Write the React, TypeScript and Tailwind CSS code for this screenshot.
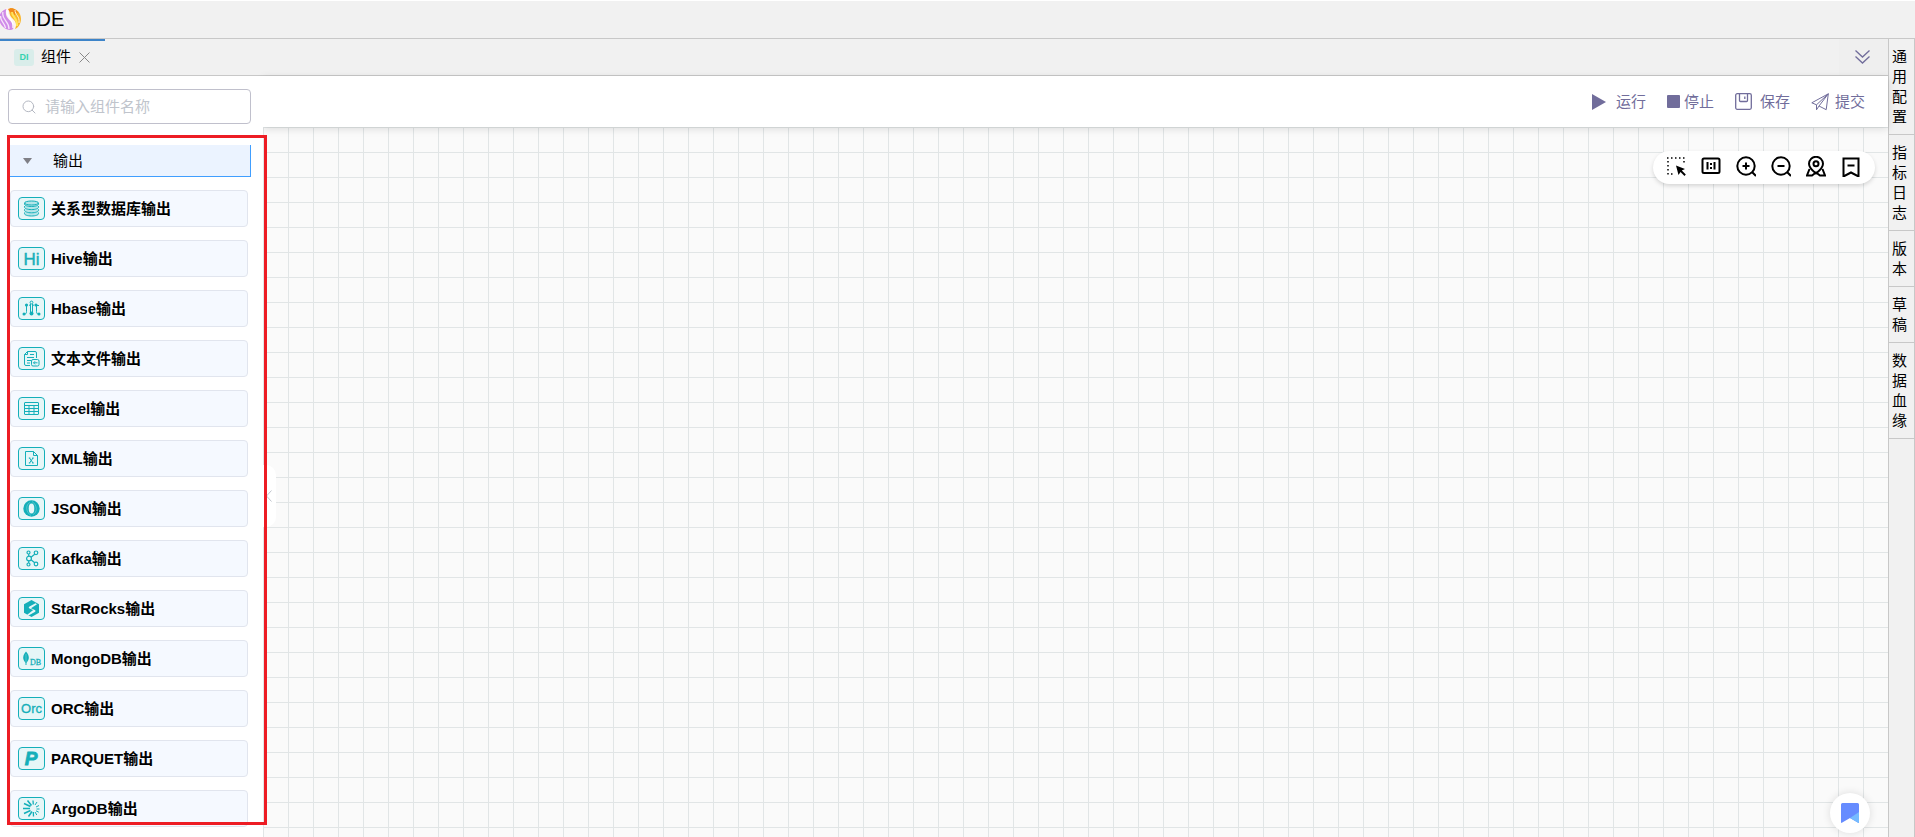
import { useState } from "react";
import type { ReactNode } from "react";
import { Search } from "lucide-react";

interface OutputComponent {
  name: string;
  icon: ReactNode;
}

const components: OutputComponent[] = [
  {
    name: "关系型数据库输出",
    icon: (
      <g fill="#b5e5e8">
        <path d="M5.5 14.5v1.2c0 1.2 3 2.3 7 2.3s7-1.1 7-2.3v-1.2" />
        <path d="M5.5 11.3v1.2c0 1.2 3 2.3 7 2.3s7-1.1 7-2.3v-1.2" />
        <path d="M5.5 8.1v1.2c0 1.2 3 2.3 7 2.3s7-1.1 7-2.3V8.1" />
        <path d="M5.5 5v1.2c0 1.2 3 2.3 7 2.3s7-1.1 7-2.3V5" />
        <ellipse cx="12.5" cy="5" rx="7" ry="2" />
      </g>
    ),
  },
  {
    name: "Hive输出",
    icon: (
      <text x="12.5" y="16.5" fontSize="17" textAnchor="middle" fill="#14afb9" strokeWidth="0.4">
        Hi
      </text>
    ),
  },
  {
    name: "Hbase输出",
    icon: (
      <g>
        <circle cx="12.5" cy="4.5" r="1.4" />
        <path d="M11.5 6v9.500M13.500 6v9.500M7.500 7v6.500c0 2-1 3-3 3M17.500 7v6.500c0 2 1 3 3 3M10 7.500l1.500-1M15 7.500l-1.500-1M17.500 7.500h2.500" />
        <g fill="#14afb9" stroke="none">
          <circle cx="7.5" cy="7" r="1.6" />
          <circle cx="17" cy="7" r="1.6" />
          <circle cx="5" cy="16" r="1.5" />
          <circle cx="20" cy="16" r="1.5" />
          <circle cx="12.5" cy="15.5" r="2" />
        </g>
      </g>
    ),
  },
  {
    name: "文本文件输出",
    icon: (
      <g>
        <path d="M11 17.500H7A1.500 1.500 0 0 1 5.500 16V6.500l3-3H16A1.500 1.500 0 0 1 17.500 5v5M5.500 6.500h3v-3M11 6.500h4M8 9.500h7M8 12.500h4M8 15h3" />
        <rect x="12.500" y="11.500" width="7.500" height="6.500" rx="1.500" fill="#e6f6f7" />
        <path d="M18.500 14.800h-4M16 13.300l-1.500 1.500 1.500 1.500" />
      </g>
    ),
  },
  {
    name: "Excel输出",
    icon: (
      <g>
        <rect x="5.500" y="4.500" width="14" height="12" rx="0.500" />
        <path d="M5.500 7.500h14M5.500 10.500h14M5.500 13.500h14M10 7.500v9M15 7.500v9" />
      </g>
    ),
  },
  {
    name: "XML输出",
    icon: (
      <g>
        <path d="M6.500 3.500h8l4 4v10h-12zM14.500 3.500v4h4" />
        <path d="M10.500 10l3.500 5M14 10l-3.500 5M9.800 10h1.500M13.200 10h1.500M9.800 15h1.500M13.200 15h1.500" />
      </g>
    ),
  },
  {
    name: "JSON输出",
    icon: (
      <g>
        <circle cx="12.500" cy="10.500" r="8.200" fill="#14afb9" stroke="none" />
        <ellipse cx="12.500" cy="10.500" rx="2.800" ry="5" fill="#e6f6f7" stroke="none" />
        <path d="M11 4.500c-4.500 2-4.500 9.500 1 13M14 16.500c4.500-2 4.500-9.500-1-13" stroke="#7dd2d7" strokeWidth="0.6" />
      </g>
    ),
  },
  {
    name: "Kafka输出",
    icon: (
      <g strokeWidth="1.200">
        <circle cx="10" cy="10.500" r="2.400" />
        <circle cx="9.500" cy="4.500" r="1.500" />
        <circle cx="9.500" cy="16.500" r="1.500" />
        <circle cx="17" cy="4.800" r="1.800" />
        <circle cx="17" cy="16" r="1.800" />
        <path d="M9.700 6v2.200M9.700 12.800V15M12 9.200l3.700-3M12 11.800l3.700 3" />
      </g>
    ),
  },
  {
    name: "StarRocks输出",
    icon: (
      <g stroke="none">
        <path d="M12.500 2l7.500 4.200v8.600L12.500 19 5 14.800V6.200z" fill="#14afb9" />
        <path d="M16.500 5.200l-6 3.300c-1 .6-.9 1.500 0 2l3.700 1.500-6 4.700 1.300.8 6.300-3.600c1-.6.9-1.600 0-2L12 10.200l6-4z" fill="#e6f6f7" />
      </g>
    ),
  },
  {
    name: "MongoDB输出",
    icon: (
      <g>
        <path d="M7 3.500c3.500 4 4 8 0 11.500-4-3.500-3.500-7.500 0-11.500z" fill="#14afb9" stroke="none" />
        <path d="M7 14v3" />
        <path d="M7 6v8" stroke="#7dd2d7" strokeWidth="0.600" />
        <text x="11" y="17" fontSize="8" fontFamily="Liberation Serif, serif" fill="#14afb9" strokeWidth="0.3">
          DB
        </text>
      </g>
    ),
  },
  {
    name: "ORC输出",
    icon: (
      <text x="12.500" y="15" fontSize="13" textAnchor="middle" fill="#14afb9" strokeWidth="0.3">
        Orc
      </text>
    ),
  },
  {
    name: "PARQUET输出",
    icon: (
      <text x="12" y="17" fontSize="19" fontWeight="bold" fontStyle="italic" textAnchor="middle" fill="#14afb9" strokeWidth="0.8">
        P
      </text>
    ),
  },
  {
    name: "ArgoDB输出",
    icon: (
      <g strokeWidth="1.500">
        <path d="M4 10.500h7M5 5.500l6.500 3M8.500 2.500l4 5M5 15.500l6.500-3M9.500 18.500l3.500-5" />
        <path d="M14 2.500l.3 4M14.500 18.500l-.2-4.500" strokeWidth="1.300" />
        <path d="M18 4l-2 3M20 7.500l-3 1.500M20.500 11h-3M19.800 14.200l-2.800-1.400M17.800 17l-1.800-3" strokeWidth="1" />
      </g>
    ),
  },
];

const sideTabs = ["通用配置", "指标日志", "版本", "草稿", "数据血缘"];

const actions = [
  {
    label: "运行",
    gap: "gap-2.5",
    icon: (
      <svg width="14" height="16" viewBox="0 0 14 16" fill="#716d9b">
        <path d="M0 0l14 8-14 8z" />
      </svg>
    ),
  },
  {
    label: "停止",
    gap: "gap-1",
    icon: <span className="size-[13px] rounded-[1px] bg-[#716d9b]" />,
  },
  {
    label: "保存",
    gap: "gap-2",
    icon: (
      <svg width="17" height="17" viewBox="0 0 17 17" fill="none" stroke="#716d9b" strokeWidth="1.300">
        <rect x="0.700" y="0.700" width="15.600" height="15.600" rx="1.500" />
        <path d="M4.500 1v6.500a1 1 0 0 0 1 1h6a1 1 0 0 0 1-1V1M9.800 3.500v2.500" />
      </svg>
    ),
  },
  {
    label: "提交",
    gap: "gap-1.5",
    icon: (
      <svg width="18" height="18" viewBox="0 0 18 18" fill="none" stroke="#716d9b" strokeLinejoin="round">
        <path d="M17.300.8L.8 9.800l4.700 2L17.300.8zM17.300.8L8 13l7.200 3.700L17.300.8zM5.500 11.800v5L8 13" />
      </svg>
    ),
  },
];

const canvasTools = [
  {
    label: "框选",
    icon: (
      <g>
        <path d="M1 2h18M2 5v14M18 5v3M5 18h4" strokeWidth="1.500" strokeDasharray="1.500 2.500" />
        <path d="M10 9.500l9 3.500-3.200 1.600 4 4-1.300 1.300-4-4L12.500 19z" fill="#000" stroke="none" />
      </g>
    ),
  },
  {
    label: "实际尺寸",
    icon: (
      <g>
        <rect x="1.500" y="2.500" width="17" height="14.500" rx="1.500" />
        <path d="M6.500 6v7.500M13.500 6v7.500M10 7v2M10 11v2" />
      </g>
    ),
  },
  {
    label: "放大",
    icon: (
      <g>
        <circle cx="10" cy="10" r="8.700" />
        <path d="M16 16l4 4M10 6.500v7M6.500 10h7" />
      </g>
    ),
  },
  {
    label: "缩小",
    icon: (
      <g>
        <circle cx="10" cy="10" r="8.700" />
        <path d="M16 16l4 4M6.500 10h7" />
      </g>
    ),
  },
  {
    label: "定位",
    icon: (
      <g>
        <path d="M10 17.500c-4.500-3.500-7-6-7-9.700a7 7 0 0 1 14 0c0 3.700-2.500 6.200-7 9.700z" />
        <circle cx="10" cy="7.800" r="2.500" />
        <path d="M3.500 13L1 19.500h5l4-3 4 3h5L16.500 13" />
      </g>
    ),
  },
  {
    label: "书签",
    icon: <path d="M2.500 2.500h15v18L10 16.500l-7.500 4zM6.500 9.500h7" />,
  },
];

function Logo() {
  return (
    <svg width="22" height="24" viewBox="0 0 22 24" className="-ml-px" fill="none">
      <circle cx="10.500" cy="12" r="11" fill="#fdf3ee" />
      <path d="M11 1C18 1 22 6 22 12c0 5-3 9-6 10 2-4 1-7-1-9-3-3-6-6-4-12z" fill="#f9b62c" />
      <path d="M9 2c5-2 9 1 11 5-3-2-4-2-4 1-3-1-6-3-7-6z" fill="#f08a1d" />
      <path d="M13 5c0 5 6 6 5 14" stroke="#ffe45c" strokeWidth="2" />
      <path d="M16 3c0 5 5 6 4 13" stroke="#fff3d8" />
      <path d="M7 2C2 4-.5 8 .3 13c1 6 6 10 11 10 4 0 4-4 2-7-3-4-8-6-6-14z" fill="#cf8be8" />
      <path d="M4 5c-2 8 6 8 6 17M1.500 9c0 6 4 6 5 12" stroke="#f7e4fb" strokeWidth="1.300" />
      <path d="M8 3c-1 8 7 8 6 18" stroke="#fff" strokeWidth="1.300" />
    </svg>
  );
}

export default function App() {
  const [keyword, setKeyword] = useState("");
  const [open, setOpen] = useState(true);

  const visible = components.filter((c) => c.name.toLowerCase().includes(keyword.toLowerCase()));

  return (
    <div className="flex h-screen flex-col overflow-hidden bg-[#f1f1f1] font-['Liberation_Sans','Noto_Sans_CJK_SC',sans-serif] text-[15px] leading-5 text-black">
      <header className="flex h-[39px] shrink-0 items-center gap-2.5 border-t border-b border-t-white border-b-[#c8c8c8] pb-px">
        <Logo />
        <h1 className="text-xl">IDE</h1>
      </header>

      <div className="flex min-h-0 flex-1">
        <div className="flex min-w-0 flex-1 flex-col">
          <nav className="flex h-[37px] shrink-0 items-stretch justify-between border-b border-[#c8c8c8]">
            <div className="flex w-[105px] items-center border-t-2 border-[#3d84c9] pb-0.5 pl-3.5">
              <span className="flex h-[17px] w-5 items-center justify-center rounded-[3px] bg-[#d9edea] text-[9px] font-bold text-[#35d3b0]">
                DI
              </span>
              <span className="ml-[7px]">组件</span>
              <button aria-label="关闭" className="ml-2">
                <svg width="11" height="11" viewBox="0 0 11 11" fill="none" stroke="#888">
                  <path d="M.5.500l10 10M10.500.500l-10 10" />
                </svg>
              </button>
            </div>
            <button aria-label="展开标签" className="flex w-[49px] items-center justify-center bg-[#efefef] pr-0.5">
              <svg width="15" height="14" viewBox="0 0 15 14" fill="none" stroke="#716d9b" strokeWidth="1.300">
                <path d="M.5.500l7 6.500 7-6.500M.5 6.500l7 6.500 7-6.500" />
              </svg>
            </button>
          </nav>

          <div className="flex min-h-0 flex-1">
            <aside className="relative z-20 flex w-[263px] shrink-0 flex-col bg-white pt-[13px] pr-3 pl-2">
              <label className="flex h-[35px] shrink-0 items-center gap-2 rounded border border-[#c0c0cc] pl-3">
                <Search size={16} strokeWidth={1.5} className="text-[#b4b8c2]" />
                <input
                  aria-label="组件名称"
                  value={keyword}
                  onChange={(e) => setKeyword(e.target.value)}
                  placeholder="请输入组件名称"
                  className="min-w-0 flex-1 outline-none placeholder:text-[#c0c4cc]"
                />
              </label>

              <div className="mt-[21px] min-h-0 flex-1 overflow-hidden">
                <button
                  onClick={() => setOpen(!open)}
                  aria-expanded={open}
                  className="flex h-8 w-full items-center border-r border-b border-[#409eff] bg-[#ebf3ff] pl-[15px]"
                >
                  <svg width="9" height="6" viewBox="0 0 9 6" fill="#7f7f86">
                    <path d="M0 0h9L4.500 6z" />
                  </svg>
                  <span className="ml-[21px]">输出</span>
                </button>

                {open && (
                  <ul className="mt-[13px] mr-[3px] ml-0.5 flex flex-col gap-[13px]">
                    {visible.map((c) => (
                      <li
                        key={c.name}
                        draggable
                        className="flex h-[37px] shrink-0 items-start gap-1.5 rounded border border-[#e1e5ee] bg-[#f5f9ff] pt-1.5 pl-[7px] font-bold"
                      >
                        <span className="flex h-[23px] w-[27px] items-center justify-center rounded border border-[#14afb9] bg-[#e6f6f7] font-normal">
                          <svg width="25" height="21" viewBox="0 0 25 21" fill="none" stroke="#14afb9">
                            {c.icon}
                          </svg>
                        </span>
                        <span className="leading-6">{c.name}</span>
                      </li>
                    ))}
                  </ul>
                )}
              </div>

              {/* highlight frame around the component list */}
              <div className="pointer-events-none absolute top-[59px] -right-1 bottom-3 left-[7px] border-3 border-[#ed1c24]" />
            </aside>

            <main className="flex min-w-0 flex-1 flex-col">
              <div className="z-10 flex h-[51px] shrink-0 items-center justify-end gap-[21px] bg-white pr-[23px] text-[#716d9b] shadow-[0_2px_8px_rgba(0,0,0,0.12)]">
                {actions.map((a) => (
                  <button key={a.label} className={`flex items-center ${a.gap}`}>
                    {a.icon}
                    {a.label}
                  </button>
                ))}
              </div>

              <div className="relative flex-1 bg-[#fafafa] bg-[linear-gradient(#e1e5e6_1px,transparent_1px),linear-gradient(90deg,#e1e5e6_1px,transparent_1px)] bg-size-[25px_25px]">
                <button
                  aria-label="收起"
                  className="absolute top-[338px] left-0 flex h-[62px] w-[13px] items-center justify-end rounded-r-[10px] bg-white pr-1"
                >
                  <svg width="6" height="12" viewBox="0 0 6 12" fill="none" stroke="#c0c4cc">
                    <path d="M5.500.500L.5 6l5 5.500" />
                  </svg>
                </button>

                <div className="absolute top-6 right-[13px] flex h-[33px] items-center gap-[15px] rounded-full bg-white pr-3.5 pb-0.5 pl-[13px] shadow-[0_2px_4px_rgba(0,0,0,0.15)]">
                  {canvasTools.map((t) => (
                    <button key={t.label} aria-label={t.label}>
                      <svg width="20" height="21" viewBox="0 0 20 21" fill="none" stroke="#000" strokeWidth="2">
                        {t.icon}
                      </svg>
                    </button>
                  ))}
                </div>

                <button
                  aria-label="收藏"
                  className="absolute right-[18px] bottom-1 flex size-10 items-center justify-center rounded-full bg-white shadow-[0_0_8px_rgba(0,0,0,0.12)]"
                >
                  <svg width="18" height="20" viewBox="0 0 18 20">
                    <path d="M0 1.500Q0 0 1.500 0h15Q18 0 18 1.500V19q0 1.500-1.300.6L9 15l-7.700 4.600Q0 20.500 0 19z" fill="#668cff" />
                    <path d="M18 9v10q0 1.500-1.300.6L9 15z" fill="#75bbff" />
                  </svg>
                </button>
              </div>
            </main>
          </div>
        </div>

        <nav className="flex w-[27px] shrink-0 flex-col border-x border-[#c8c8c8]">
          {sideTabs.map((t) => (
            <button key={t} className="border-b border-[#c8c8c8] pt-2 pb-[7px] pl-[3px] text-left">
              <span className="block w-[15px] break-all">{t}</span>
            </button>
          ))}
        </nav>
      </div>
    </div>
  );
}
